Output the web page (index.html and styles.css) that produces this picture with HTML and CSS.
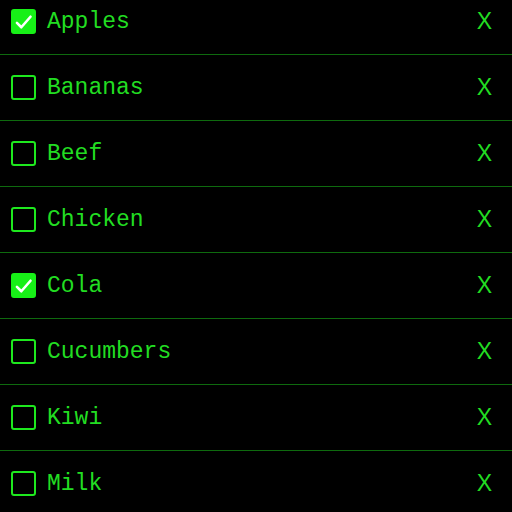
FILE: index.html
```html
<!DOCTYPE html>
<html lang="en">
<head>
    <meta charset="UTF-8">
    <title>Shopping List</title>
    <link rel="stylesheet" href="styles.css">
</head>
<body>

<ul class="item-list">
    <li class="item">
        <span class="check checked"><svg viewBox="0 0 24 24"><path d="M4.5 13l5 5L20 6"/></svg></span>
        <span class="name">Apples</span>
        <span class="remove">X</span>
    </li>
    <li class="item">
        <span class="check"></span>
        <span class="name">Bananas</span>
        <span class="remove">X</span>
    </li>
    <li class="item">
        <span class="check"></span>
        <span class="name">Beef</span>
        <span class="remove">X</span>
    </li>
    <li class="item">
        <span class="check"></span>
        <span class="name">Chicken</span>
        <span class="remove">X</span>
    </li>
    <li class="item">
        <span class="check checked"><svg viewBox="0 0 24 24"><path d="M4.5 13l5 5L20 6"/></svg></span>
        <span class="name">Cola</span>
        <span class="remove">X</span>
    </li>
    <li class="item">
        <span class="check"></span>
        <span class="name">Cucumbers</span>
        <span class="remove">X</span>
    </li>
    <li class="item">
        <span class="check"></span>
        <span class="name">Kiwi</span>
        <span class="remove">X</span>
    </li>
    <li class="item">
        <span class="check"></span>
        <span class="name">Milk</span>
        <span class="remove">X</span>
    </li>
</ul>

</body>
</html>
```

FILE: styles.css
```css
body {
    margin: 0;
    padding: 0;
    background-color: #000;
    overflow: hidden;
}

.item-list {
    list-style: none;
    margin: -11px 0 0;
    padding: 0;
}

.item {
    display: flex;
    align-items: center;
    height: 65px;
    padding: 0 20px 0 11px;
    border-bottom: 1px solid #0e6a0e;
}

.check {
    width: 25px;
    height: 25px;
    box-sizing: border-box;
    border: 2px solid #1ee81e;
    border-radius: 3px;
    display: flex;
    align-items: center;
    justify-content: center;
}

.check.checked {
    background-color: #17f017;
    border-color: #17f017;
}

.check svg {
    width: 22px;
    height: 22px;
    fill: none;
    stroke: #fff;
    stroke-width: 3;
    stroke-linecap: round;
    stroke-linejoin: round;
}

.name {
    flex: 1;
    margin-left: 11px;
    font-family: 'Liberation Mono', 'Courier New', monospace;
    font-size: 23px;
    color: #22dd22;
}

.remove {
    font-family: 'Liberation Sans', Arial, sans-serif;
    font-size: 23px;
    color: #22dd22;
}
```
